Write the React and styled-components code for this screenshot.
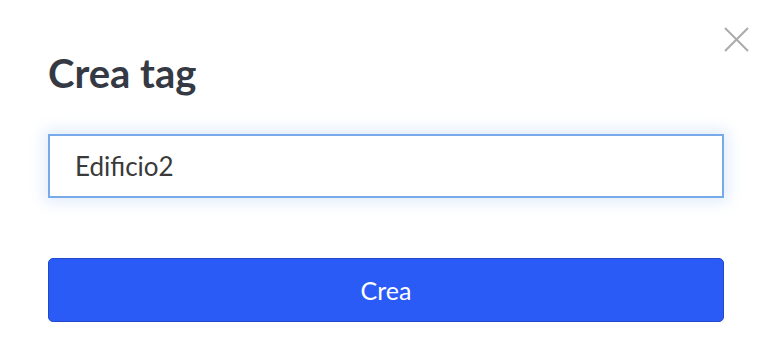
import React, { useState } from "react";
import styled, { createGlobalStyle } from "styled-components";

const GlobalStyle = createGlobalStyle`
  html, body {
    margin: 0;
    padding: 0;
    background: #ffffff;
    font-family: Lato, "Liberation Sans", sans-serif;
  }
`;

// Modal body
const Modal = styled.div`
  position: relative;
  width: 764px;
  height: 362px;
  box-sizing: border-box;
  padding: 49px 40px 0 48px;
  background: #ffffff;
`;

// Close button (top right corner, over the content)
const CloseButton = styled.button`
  position: absolute;
  top: 27px;
  right: 15px;
  width: 25px;
  height: 25px;
  padding: 0;
  border: none;
  background: none;
  cursor: pointer;
  display: flex;
`;

const Title = styled.h1`
  margin: 0;
  font-size: 40px;
  line-height: 48px;
  font-weight: 700;
  color: #343944;
`;

const Form = styled.form`
  display: flex;
  flex-direction: column;
  gap: 60px;
  margin-top: 37px;
`;

const Input = styled.input`
  width: 100%;
  height: 64px;
  box-sizing: border-box;
  padding: 0 25px;
  border: 2px solid #77aae9;
  border-radius: 0;
  outline: none;
  font-family: inherit;
  font-size: 26px;
  color: #3a3a3a;
  caret-color: #222;
  box-shadow: 0 0 14px 4px rgba(120, 170, 235, 0.22);
`;

const SubmitButton = styled.button`
  width: 100%;
  height: 64px;
  border: 1px solid #1f49c9;
  border-radius: 5px;
  background: #2b5bf6;
  color: #ffffff;
  font-family: inherit;
  font-size: 25px;
  cursor: pointer;
`;

export default function App() {
  const [name, setName] = useState("Edificio2");

  return (
    <>
      <GlobalStyle />
      <Modal>
        <CloseButton aria-label="Chiudi">
          <svg width="25" height="25" viewBox="0 0 25 25">
            <path d="M1 1L24 24M24 1L1 24" stroke="#ababab" strokeWidth="2" />
          </svg>
        </CloseButton>
        <Title>Crea tag</Title>
        <Form onSubmit={(e) => e.preventDefault()}>
          <Input value={name} onChange={(e) => setName(e.target.value)} autoFocus />
          <SubmitButton type="submit">Crea</SubmitButton>
        </Form>
      </Modal>
    </>
  );
}
